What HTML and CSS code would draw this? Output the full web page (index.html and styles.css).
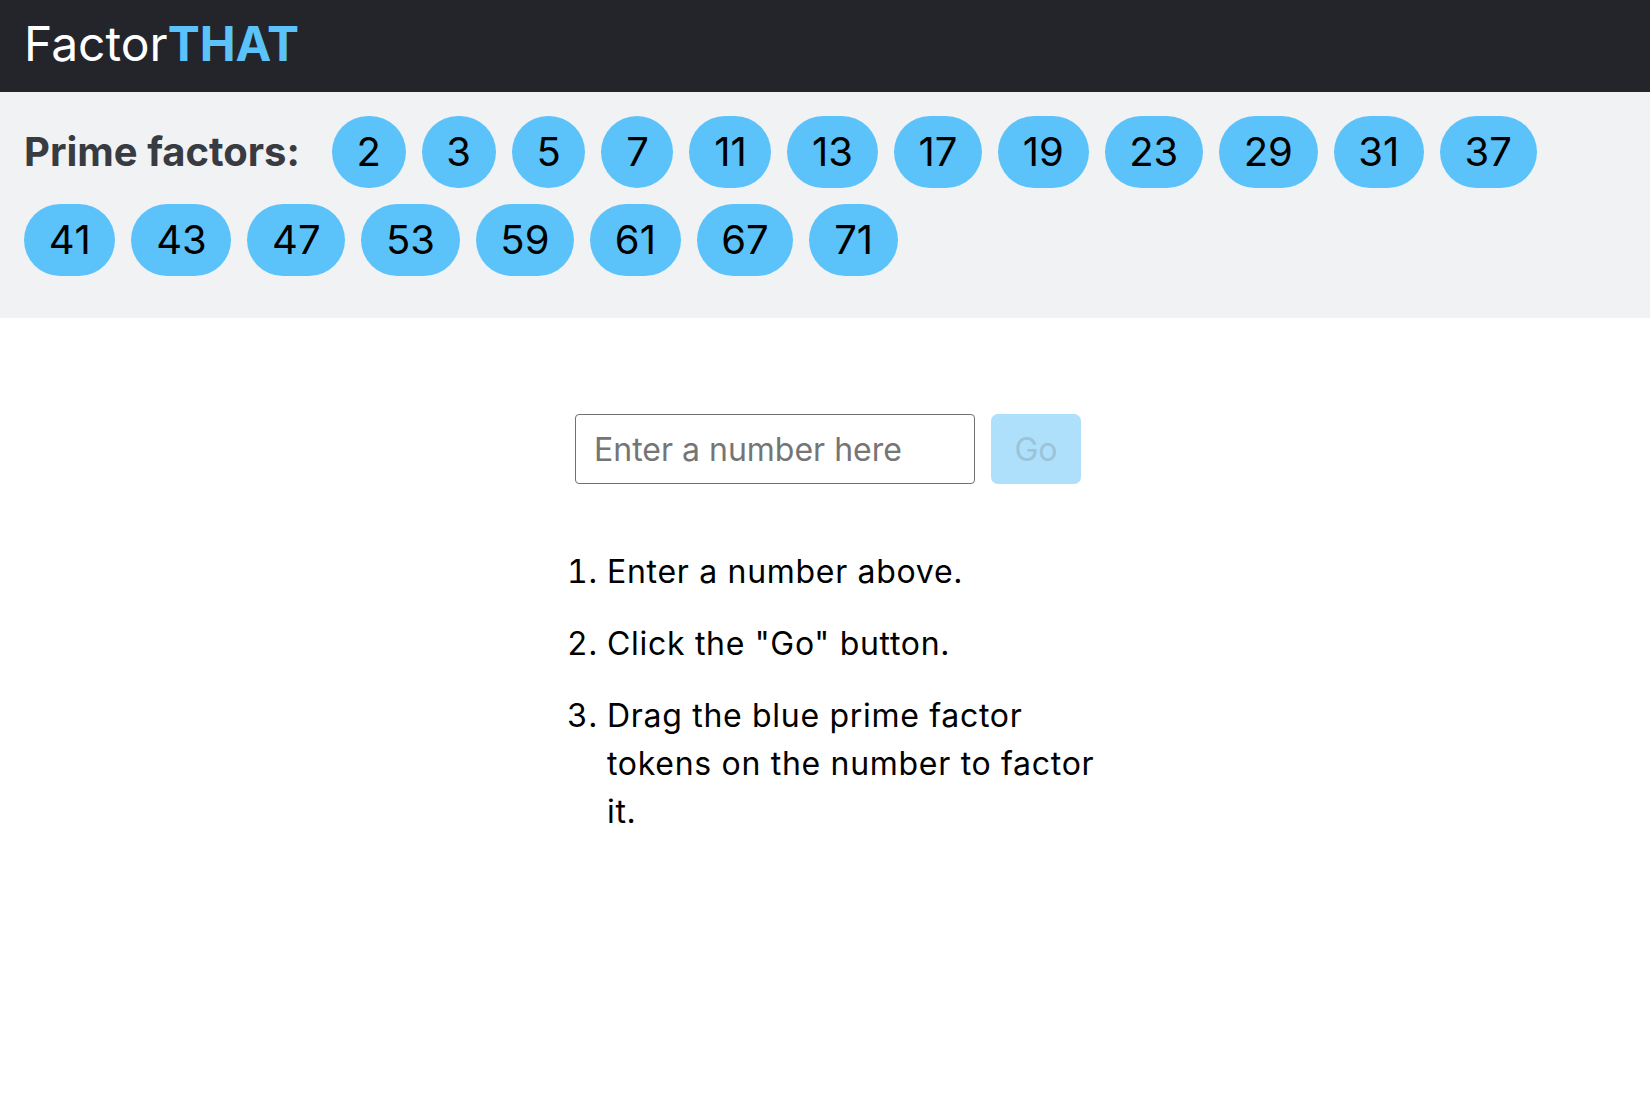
FILE: index.html
```html
<!DOCTYPE html>
<html lang="en">
<head>
<meta charset="utf-8">
<title>FactorTHAT</title>
<link rel="stylesheet" href="styles.css">
</head>
<body>
<header class="topbar">
  <h1 class="brand"><span class="brand-plain">Factor</span><span class="brand-strong">THAT</span></h1>
</header>
<section class="factors">
  <h2 class="factors-label">Prime factors:</h2>
  <span class="token">2</span>
  <span class="token">3</span>
  <span class="token">5</span>
  <span class="token">7</span>
  <span class="token">11</span>
  <span class="token">13</span>
  <span class="token">17</span>
  <span class="token">19</span>
  <span class="token">23</span>
  <span class="token">29</span>
  <span class="token">31</span>
  <span class="token">37</span>
  <span class="token">41</span>
  <span class="token">43</span>
  <span class="token">47</span>
  <span class="token">53</span>
  <span class="token">59</span>
  <span class="token">61</span>
  <span class="token">67</span>
  <span class="token">71</span>
</section>
<main class="main">
  <form class="entry">
    <input class="entry-input" type="text" placeholder="Enter a number here">
    <button class="entry-go" type="button" disabled>Go</button>
  </form>
  <ol class="steps">
    <li>Enter a number above.</li>
    <li>Click the "Go" button.</li>
    <li>Drag the blue prime factor tokens on the number to factor it.</li>
  </ol>
</main>
</body>
</html>
```
FILE: styles.css
```css
* {
  box-sizing: border-box;
}

body {
  margin: 0;
  font-family: Inter, "Noto Sans", "Liberation Sans", sans-serif;
  background: #ffffff;
  color: #000000;
}

.topbar {
  height: 92px;
  background: #23252b;
  padding: 15px 24px 0;
}

.brand {
  margin: 0;
  font-size: 48px;
  line-height: 1.2;
  font-weight: 400;
}

.brand-plain {
  color: #ffffff;
}

.brand-strong {
  color: #5bc3fa;
  font-weight: 700;
}

.factors {
  background: #f1f2f4;
  padding: 24px 24px 42px;
  display: flex;
  flex-wrap: wrap;
  align-items: center;
  gap: 16px;
}

.factors-label {
  margin: 0 16px 0 0;
  font-size: 40px;
  font-weight: 700;
  color: #383b42;
  line-height: 1.2;
}

.token {
  display: inline-flex;
  align-items: center;
  justify-content: center;
  height: 72px;
  padding: 0 24.7px;
  border-radius: 9999px;
  background: #5bc3fa;
  color: #000000;
  font-size: 40px;
  line-height: 1;
  font-kerning: none;
}

.main {
  width: 584px;
  margin: 96px auto 0;
}

.entry {
  display: flex;
  justify-content: center;
  gap: 16px;
  margin: 0;
  padding-left: 6px;
}

.entry-input {
  width: 400px;
  height: 70px;
  border: 1.5px solid #707070;
  border-radius: 4px;
  padding: 0 18px;
  font-family: inherit;
  font-size: 32px;
  color: #000;
  background: #fff;
}

.entry-input::placeholder {
  color: #757575;
}

.entry-go {
  width: 90px;
  height: 70px;
  border: none;
  border-radius: 7px;
  background: #aee0fb;
  color: #9cc3d8;
  font-family: inherit;
  font-size: 32px;
  padding: 0;
}

.steps {
  margin: 64px 0 0;
  padding-left: 74px;
  font-size: 32px;
  line-height: 48px;
  letter-spacing: 0.7px;
}

.steps li {
  margin-bottom: 24px;
}
```
